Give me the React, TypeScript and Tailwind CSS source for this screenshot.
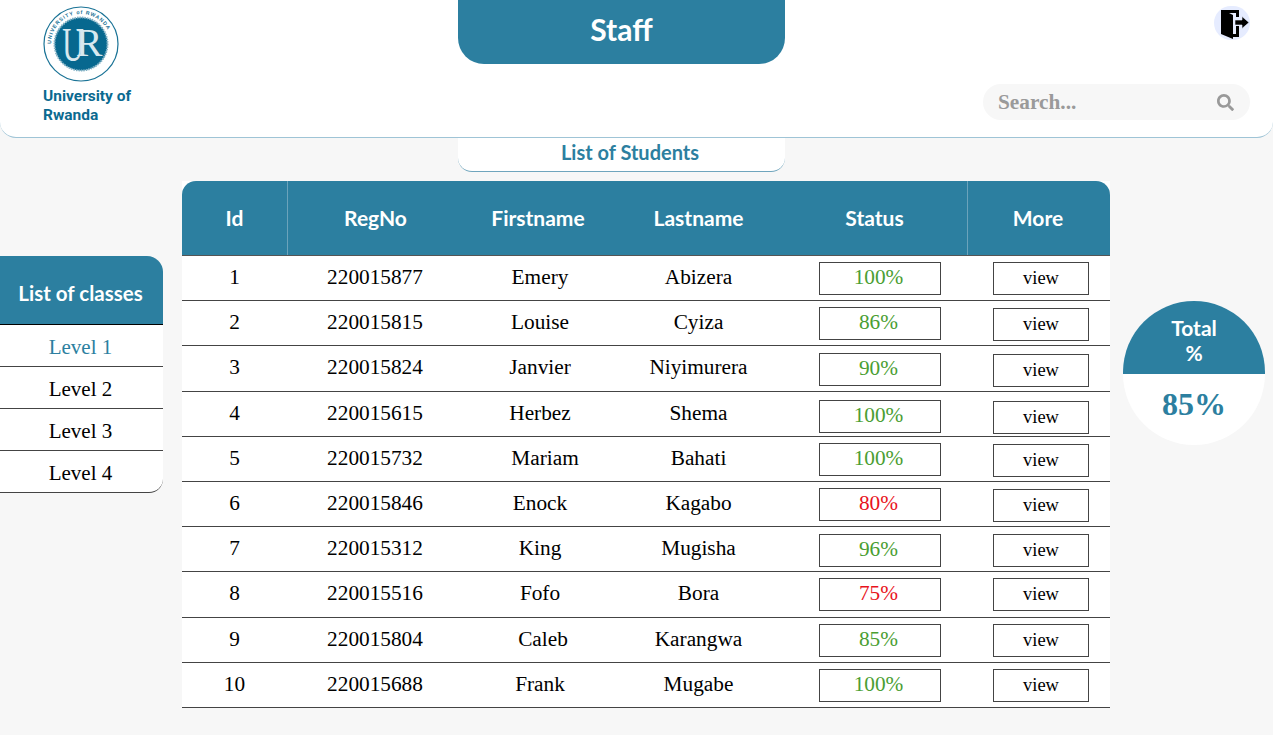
import { FaSearch } from "react-icons/fa";

const G = "text-[#4a9e32]";
const R = "text-[#e8121c]";
type Row = { id: number; reg: string; first: string; fx: string; last: string; pct: string; c: string; st: string; vt: string };
const rows: Row[] = [
  { id: 1, reg: "220015877", first: "Emery", fx: "pl-[0px]", last: "Abizera", pct: "100%", c: G, st: "mt-[6px]", vt: "mt-[6px]" },
  { id: 2, reg: "220015815", first: "Louise", fx: "pl-[0px]", last: "Cyiza", pct: "86%", c: G, st: "mt-[6px]", vt: "mt-[7px]" },
  { id: 3, reg: "220015824", first: "Janvier", fx: "pl-[0px]", last: "Niyimurera", pct: "90%", c: G, st: "mt-[7px]", vt: "mt-[8px]" },
  { id: 4, reg: "220015615", first: "Herbez", fx: "pl-[0px]", last: "Shema", pct: "100%", c: G, st: "mt-[8px]", vt: "mt-[9px]" },
  { id: 5, reg: "220015732", first: "Mariam", fx: "pl-[10px]", last: "Bahati", pct: "100%", c: G, st: "mt-[6px]", vt: "mt-[7px]" },
  { id: 6, reg: "220015846", first: "Enock", fx: "pl-[0px]", last: "Kagabo", pct: "80%", c: R, st: "mt-[6px]", vt: "mt-[7px]" },
  { id: 7, reg: "220015312", first: "King", fx: "pl-[0px]", last: "Mugisha", pct: "96%", c: G, st: "mt-[7px]", vt: "mt-[7px]" },
  { id: 8, reg: "220015516", first: "Fofo", fx: "pl-[0px]", last: "Bora", pct: "75%", c: R, st: "mt-[6px]", vt: "mt-[6px]" },
  { id: 9, reg: "220015804", first: "Caleb", fx: "pl-[6px]", last: "Karangwa", pct: "85%", c: G, st: "mt-[6px]", vt: "mt-[6px]" },
  { id: 10, reg: "220015688", first: "Frank", fx: "pl-[0px]", last: "Mugabe", pct: "100%", c: G, st: "mt-[6px]", vt: "mt-[6px]" },
];

function Logo() {
  return (
    <svg width="76" height="80" viewBox="0 0 76 80" className="block">
      <circle cx="38" cy="38" r="37" fill="#fff" stroke="#1a7396" strokeWidth="1.2" />
      <circle cx="38" cy="38" r="26.5" fill="#07688f" stroke="#7fb0c4" strokeWidth="2" strokeDasharray="1.5 1" />
      <defs>
        <path id="ringText" d="M 8 38 A 30 30 0 0 1 68 38" />
      </defs>
      <text fontFamily="'Liberation Sans', sans-serif" fontSize="5.2" fontWeight="700" fill="#1a7396" letterSpacing="0.9">
        <textPath href="#ringText">UNIVERSITY of RWANDA</textPath>
      </text>
      <text transform="translate(30 55) scale(0.62 1)" textAnchor="middle" fontFamily="'Liberation Serif', serif" fontSize="48" fill="#d7e8ef">U</text>
      <text x="46" y="50" textAnchor="middle" fontFamily="'Liberation Serif', serif" fontSize="40" fill="#d7e8ef">R</text>
    </svg>
  );
}

function ExitIcon() {
  return (
    <svg width="36" height="34" viewBox="0 0 36 34" className="block">
      <path d="M7 4H25V11H22V7H15L19 9V28H22V20H25V31H19V33L7 28Z" fill="#000" />
      <path d="M21 14H28V10.5L35 16.5L28 22.5V19H21Z" fill="#000" stroke="#e6ecff" strokeWidth="0.6" />
    </svg>
  );
}

export default function App() {
  return (
    <div className="min-h-screen bg-[#f7f7f7] font-['Liberation_Serif',serif] text-black overflow-hidden">
      <header className="h-[138px] bg-white border-b border-[#9fc4d6] rounded-b-[16px] flex">
        <div className="w-[458px] pl-[43px] pt-[6px]">
          <Logo />
          <div className="font-['Roboto',sans-serif] font-bold text-[15.5px] leading-[19px] text-[#0b6a90] mt-[1px]">
            University of
            <br />
            Rwanda
          </div>
        </div>
        <div className="w-[327px] h-[64px] pb-[6px] bg-[#2c7fa0] rounded-b-[26px] flex items-center justify-center text-white font-['Lato',sans-serif] font-bold text-[30px]">
          Staff
        </div>
        <div className="flex-1 flex flex-col items-end pr-[23px]">
          <div className="w-[36px] h-[34px] mt-[6px] rounded-full bg-[#e6ecff]">
            <ExitIcon />
          </div>
          <div className="w-[267px] h-[36px] mt-[44px] rounded-full bg-[#f7f7f7] flex items-center justify-between pl-[15px] pr-[16px]">
            <span className="font-bold text-[21.3px] pt-[2px] text-[#9a9a9a]">Search...</span>
            <FaSearch className="w-[17px] h-[17px] text-[#999999]" />
          </div>
        </div>
      </header>

      <div className="ml-[458px] w-[327px] h-[34px] pb-[6px] bg-white border-b border-[#6fa5bd] rounded-b-[14px] flex items-center justify-center pl-[17px] font-['Lato',sans-serif] font-bold text-[#2c7fa0] text-[20px]">
        List of Students
      </div>

      <main className="flex items-start mt-[9px]">
        <aside className="w-[163px] mt-[75px] shrink-0">
          <div className="h-[69px] pt-[7px] pr-[2px] bg-[#2c7fa0] rounded-tr-[16px] border-b border-black flex items-center justify-center text-white font-['Lato',sans-serif] font-bold text-[20.5px]">
            List of classes
          </div>
          {["Level 1", "Level 2", "Level 3", "Level 4"].map((l, i) => (
            <div
              key={l}
              className={`h-[42px] pt-[5px] pr-[2px] bg-white border-b border-[#444444] flex items-center justify-center text-[21px] ${i === 0 ? "text-[#2c7fa0]" : "text-black"} ${i === 3 ? "rounded-br-[14px]" : ""}`}
            >
              {l}
            </div>
          ))}
        </aside>

        <section className="w-[928px] ml-[19px] shrink-0 bg-white">
          <div className="h-[75px] bg-[#2c7fa0] rounded-t-[14px] border-b border-[#555555] grid grid-cols-[106px_175px_150px_171px_167px_17px_142px] items-center text-center text-white font-['Lato',sans-serif] font-bold text-[21px]">
            <div className="h-full flex items-center justify-center border-r border-[#6ba3bb]">Id</div>
            <div>RegNo</div>
            <div>Firstname</div>
            <div>Lastname</div>
            <div className="pl-[14px]">Status</div>
            <div className="h-full border-r border-[#6ba3bb]" />
            <div className="pr-[2px]">More</div>
          </div>
          {rows.map((r) => (
            <div key={r.id} className="h-[45.2px] border-b border-[#444444] grid grid-cols-[105px_176px_154px_163px_187px_143px] text-[21.3px] leading-[43.8px] text-center">
              <div>{r.id}</div>
              <div>{r.reg}</div>
              <div className={r.fx}>{r.first}</div>
              <div>{r.last}</div>
              <div className="pl-[39px]">
                <div className={`w-[122px] h-[33px] pr-[3px] border border-[#444444] leading-[28px] ${r.st} ${r.c}`}>{r.pct}</div>
              </div>
              <div className="pl-[26px]">
                <div className={`w-[96px] h-[33px] border border-[#444444] leading-[31px] text-[18.5px] ${r.vt}`}>view</div>
              </div>
            </div>
          ))}
        </section>

        <div className="w-[142px] h-[144px] ml-[13px] mt-[120px] rounded-full overflow-hidden shrink-0 flex flex-col bg-white">
          <div className="h-[73px] bg-[#2c7fa0] text-white font-['Lato',sans-serif] font-bold text-[21px] leading-[25px] text-center pt-[14px]">
            Total
            <br />%
          </div>
          <div className="flex-1 flex items-center justify-center font-bold text-[32px] text-[#2c7fa0] pb-[12px]">85%</div>
        </div>
      </main>
    </div>
  );
}
